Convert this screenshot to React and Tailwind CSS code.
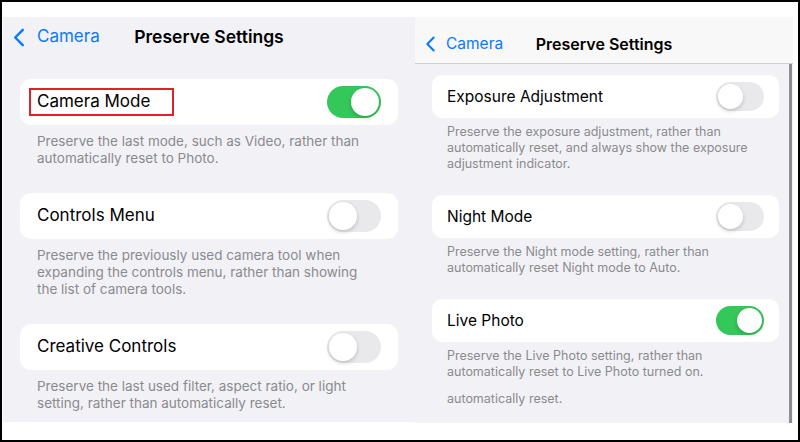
import React from 'react';

const font = { fontFamily: 'Inter, "Noto Sans", sans-serif' };

function Chevron({ className }) {
  return (
    <svg viewBox="0 0 12 20" className={className} fill="none" stroke="#0a7aff" strokeWidth="2.6" strokeLinecap="round" strokeLinejoin="round">
      <polyline points="10,2 2,10 10,18" />
    </svg>
  );
}

function Toggle({ on, size = 'lg' }) {
  const track = size === 'lg' ? 'w-[54px] h-[32px] p-[2px]' : 'w-[48px] h-[29px] p-[2px]';
  const knob = size === 'lg' ? 'w-[28px] h-[28px]' : 'w-[25px] h-[25px]';
  return (
    <div className={`${track} rounded-full flex shrink-0 ${on ? 'bg-[#34c759] justify-end' : 'bg-[#e9e9eb] justify-start'}`}>
      <div className={`${knob} rounded-full bg-white shadow-[0_2px_4px_rgba(0,0,0,0.18)]`} />
    </div>
  );
}

function LeftSection({ title, desc, on, boxed, first }) {
  return (
    <div className={first ? 'mt-[22px]' : 'mt-[26px]'}>
      <div className="h-[46px] rounded-[11px] bg-white flex items-center justify-between pl-[17px] pr-[17px]">
        {boxed ? (
          <span className="-ml-[8px] h-[28px] w-[145px] border-[2.5px] border-[#e0202a] flex items-center pl-[6px] text-[17px] text-black">
            {title}
          </span>
        ) : (
          <span className="text-[17px] text-black">{title}</span>
        )}
        <Toggle on={on} />
      </div>
      <p className="mt-[8px] px-[17px] text-[13.5px] leading-[17px] text-[#8a8a8e]">{desc}</p>
    </div>
  );
}

function RightSection({ title, desc, on, first }) {
  return (
    <div className={first ? 'mt-[11px]' : 'mt-[23px]'}>
      <div className="h-[43px] rounded-[10px] bg-white flex items-center justify-between pl-[15px] pr-[15px]">
        <span className="text-[15.5px] text-black">{title}</span>
        <Toggle on={on} size="sm" />
      </div>
      <p className="mt-[6px] px-[15px] text-[12.5px] leading-[16px] text-[#8a8a8e]">{desc}</p>
    </div>
  );
}

export default function App() {
  return (
    <div style={font} className="w-[800px] h-[442px] border-2 border-black bg-white flex items-start pt-[15px] pl-px">
      <div className="w-[412px] h-[405px] bg-[#f2f2f6] overflow-hidden">
        <div className="h-[40px] grid grid-cols-[1fr_auto_1fr] items-center">
          <div className="flex items-center pl-[10px] gap-[12px] text-[#0a7aff] text-[17px]">
            <Chevron className="w-[12px] h-[19px]" />
            <span>Camera</span>
          </div>
          <span className="text-[17.5px] font-semibold text-black">Preserve Settings</span>
          <div />
        </div>
        <div className="px-[17px]">
          <LeftSection first boxed on title="Camera Mode" desc={<>Preserve the last mode, such as Video, rather than<br />automatically reset to Photo.</>} />
          <LeftSection title="Controls Menu" desc={<>Preserve the previously used camera tool when<br />expanding the controls menu, rather than showing<br />the list of camera tools.</>} />
          <LeftSection title="Creative Controls" desc={<>Preserve the last used filter, aspect ratio, or light<br />setting, rather than automatically reset.</>} />
        </div>
      </div>
      <div className="w-[378px] h-[406px] bg-[#f2f2f6] flex flex-col overflow-hidden">
        <div className="h-[47px] pt-[7px] bg-[#f8f8f8] border-b border-[#cfcfd2] grid grid-cols-[1fr_auto_1fr] items-center shrink-0">
          <div className="flex items-center pl-[10px] gap-[10px] text-[#0a7aff] text-[15.5px]">
            <Chevron className="w-[11px] h-[16px]" />
            <span>Camera</span>
          </div>
          <span className="text-[16px] font-semibold text-black">Preserve Settings</span>
          <div />
        </div>
        <div className="flex flex-1 min-h-0">
          <div className="flex-1 pl-[17px] pr-[10px]">
            <RightSection first title="Exposure Adjustment" desc={<>Preserve the exposure adjustment, rather than<br />automatically reset, and always show the exposure<br />adjustment indicator.</>} />
            <RightSection title="Night Mode" desc={<>Preserve the Night mode setting, rather than<br />automatically reset Night mode to Auto.</>} />
            <RightSection on title="Live Photo" desc={<>Preserve the Live Photo setting, rather than<br />automatically reset to Live Photo turned on.</>} />
            <p className="mt-[11px] px-[15px] text-[12.5px] leading-[16px] text-[#8a8a8e]">automatically reset.</p>
          </div>
          <div className="w-[3px] bg-[#8c8c8e] mr-px" />
        </div>
      </div>
    </div>
  );
}
